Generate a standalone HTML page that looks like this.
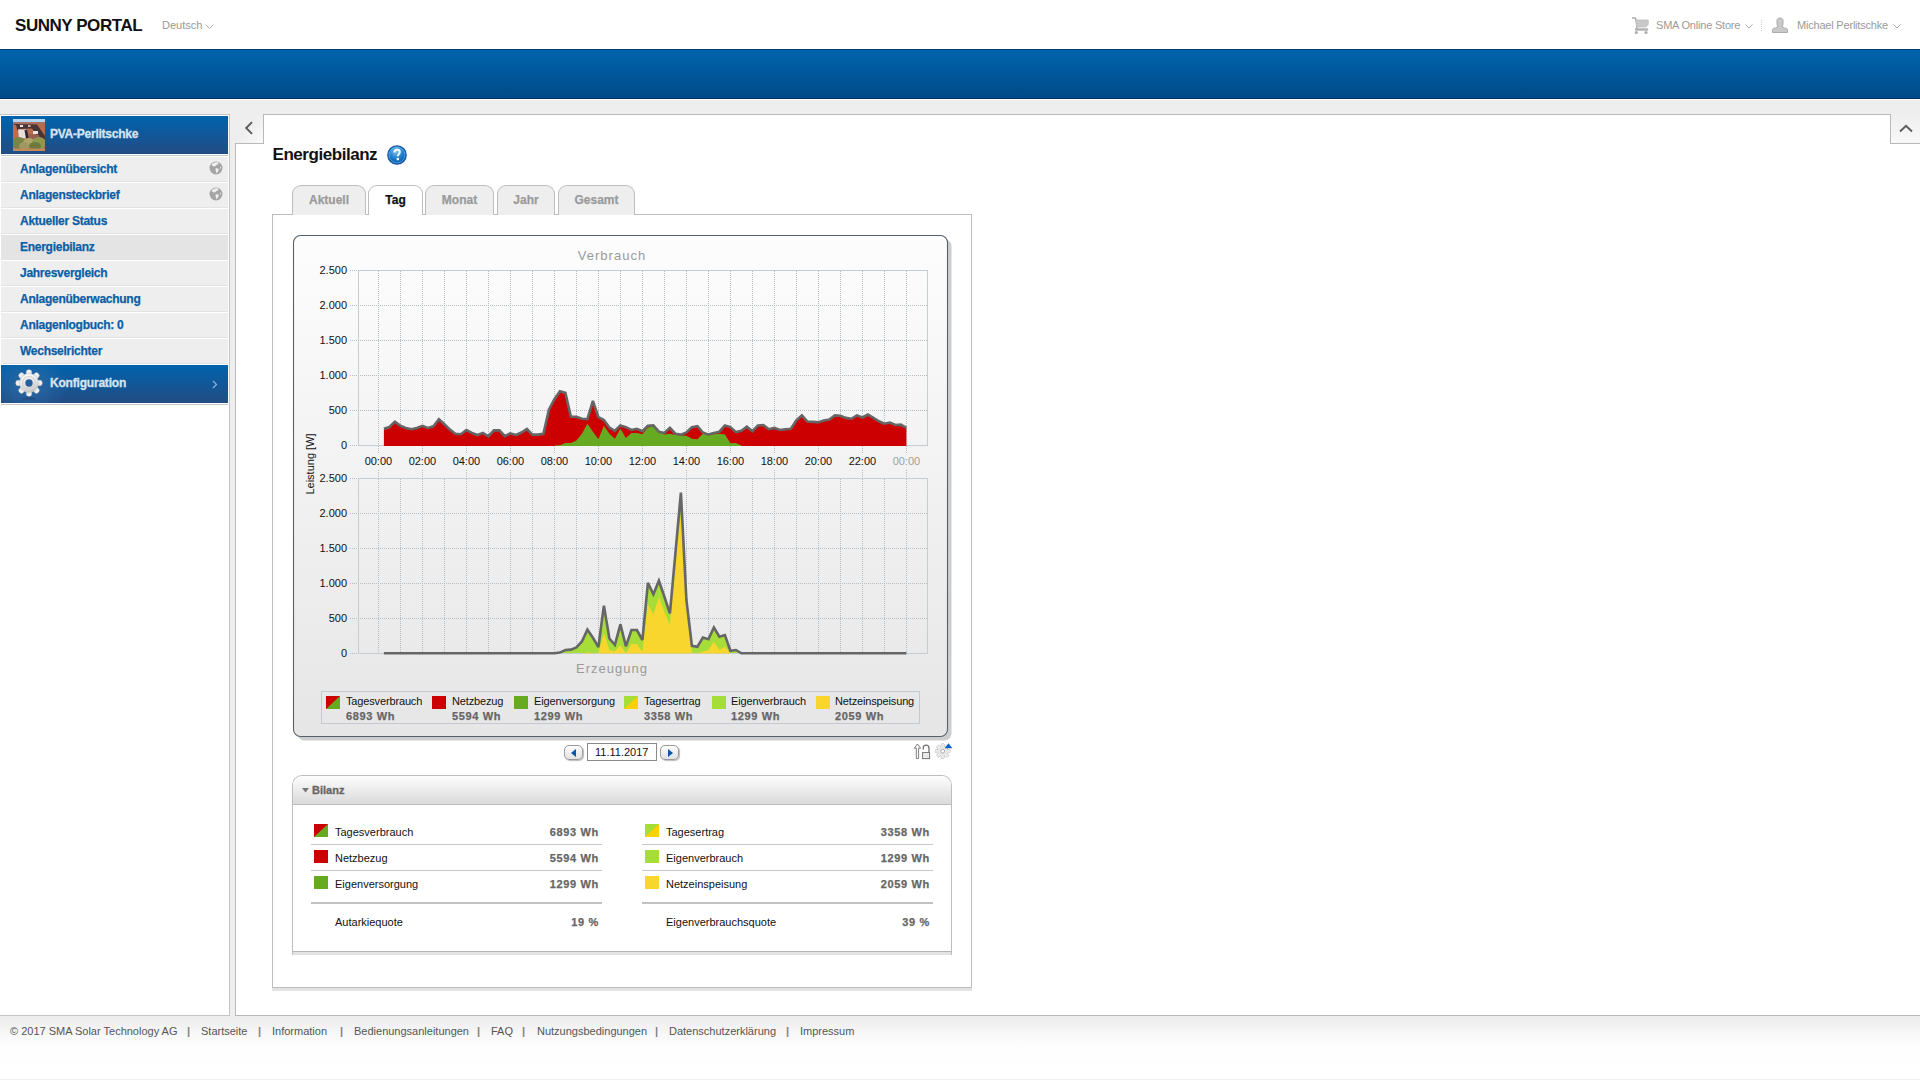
<!DOCTYPE html>
<html><head><meta charset="utf-8"><title>Sunny Portal</title>
<style>
*{box-sizing:border-box}
html,body{margin:0;padding:0}
body{width:1920px;height:1080px;overflow:hidden;position:relative;background:#fff;font-family:"Liberation Sans",sans-serif;}
.a{position:absolute}
.t{position:absolute;white-space:nowrap;line-height:1}
#banner{left:0;top:49px;width:1920px;height:50px;background:linear-gradient(#0064ad,#004a87);border-top:1px solid #003f73;border-bottom:1px solid #003366}
#band{left:0;top:100px;width:1920px;height:916px;background:#eeeeee}
#side{left:0;top:114px;width:230px;height:902px;background:#fff;border-top:1px solid #c4c4c4;border-right:1px solid #c4c4c4;border-bottom:1px solid #c4c4c4}
.shead{position:absolute;left:1px;width:227px;background:linear-gradient(#0063ac,#224c84)}
.mi{position:absolute;left:1px;width:227px;height:26px;background:#eeeeee;border-bottom:1px solid #fff;box-shadow:inset 0 -1px 0 #e2e2e2}
.mi span{position:absolute;left:19px;top:6px;font-size:12px;font-weight:bold;color:#0a5fa6;white-space:nowrap;line-height:1;letter-spacing:-0.27px}
.globe{position:absolute;left:208px;top:4px;width:14px;height:14px}
#content{left:235px;top:143px;width:1685px;height:873px;background:#fff;border-left:1px solid #b9b9b9;border-bottom:1px solid #b9b9b9}
#ctop{left:263px;top:114px;width:1628px;height:30px;background:#fff;border:1px solid #b9b9b9;border-bottom:none}
#ltab{left:236px;top:114px;width:27px;height:29px;background:linear-gradient(135deg,#eeeeee 45%,#fafafa)}
#rtab{left:1891px;top:114px;width:29px;height:29px;background:linear-gradient(#eeeeee,#f8f8f8)}
.hl{position:absolute;height:1px;background:#b9b9b9}
.tab{position:absolute;top:185px;height:30px;border:1px solid #bdbdbd;border-bottom:none;border-radius:9px 9px 0 0;background:#eeeeee;font-size:12px;font-weight:bold;color:#9b9b9b;text-align:center}
.tab span{position:absolute;top:8px;left:0;right:0;line-height:1}
#tpanel{left:272px;top:214px;width:700px;height:774px;border:1px solid #bdbdbd;background:#fff;box-shadow:0 3px 0 #e2e2e2}
#chart{position:absolute;left:0;top:0;pointer-events:none}
.gd{stroke:#b4bcc4;stroke-width:1;stroke-dasharray:1 1;fill:none}
.pb{fill:none;stroke:#c5ccd3;stroke-width:1}
.yl{font-family:"Liberation Sans",sans-serif;font-size:11px;fill:#111;text-anchor:end}
.xl{font-family:"Liberation Sans",sans-serif;font-size:11px;fill:#111;text-anchor:middle}
.xg{fill:#a0a0a0}
.ttl{font-family:"Liberation Sans",sans-serif;font-size:13px;fill:#9a9a9a;text-anchor:middle;letter-spacing:1px}
.yax{font-family:"Liberation Sans",sans-serif;font-size:11px;fill:#111;text-anchor:middle}
.ln{fill:none;stroke:#666;stroke-width:2.6;stroke-linejoin:miter;stroke-miterlimit:3}
.lg{position:absolute;top:696px;width:14px;height:13px}
.lgt{position:absolute;top:696px;font-size:11px;color:#111;white-space:nowrap;line-height:1;letter-spacing:-0.15px}
.lgv{position:absolute;top:711px;font-size:11px;font-weight:bold;color:#666;white-space:nowrap;line-height:1;letter-spacing:0.65px}
.navb{position:absolute;top:745px;width:19px;height:15px;border:1px solid #9a9a9a;border-radius:5px;background:linear-gradient(#fdfdfd,#e2e2e2);box-shadow:1px 1px 1px #bbb}
#bil{left:292px;top:775px;width:660px;height:180px;border:1px solid #bdbdbd;border-bottom:none;border-radius:10px 10px 0 0;background:#fff}
#bilf{left:0;top:175px;width:658px;height:4px;border-top:1px solid #b5b5b5;background:#e2e2e2}
#bilh{left:0;top:0;width:658px;height:29px;border-bottom:1px solid #bdbdbd;border-radius:9px 9px 0 0;background:linear-gradient(#fdfdfd,#dadada)}
.bi{position:absolute;width:14px;height:13px}
.bt{position:absolute;font-size:11px;color:#111;white-space:nowrap;line-height:1}
.bv{position:absolute;font-size:11px;font-weight:bold;color:#666;white-space:nowrap;line-height:1;text-align:right;letter-spacing:0.65px;margin-right:-0.65px}
.bs{position:absolute;height:1px;background:#c9c9c9}
#foot{left:0;top:1016px;width:1920px;height:64px;background:linear-gradient(#ebebeb,#f8f8f8 18px,#fefefe 32px,#fff);border-bottom:1px solid #f0f0f0}
.ft{position:absolute;top:1026px;font-size:11px;color:#555;white-space:nowrap;line-height:1}
.bb{-webkit-text-stroke:0.3px currentColor}
.lgv,.bv,.mi span,.tab span{-webkit-text-stroke:0.25px currentColor}
</style></head>
<body>
<!-- header -->
<div class="t" style="left:15px;top:17px;font-size:17px;font-weight:bold;color:#111;letter-spacing:-0.45px">SUNNY PORTAL</div>
<div class="t" style="left:162px;top:20px;font-size:11px;color:#999">Deutsch</div>
<svg class="a" style="left:205px;top:24px" width="9" height="6"><path d="M0.5,0.5 L4.5,4.5 L8.5,0.5" fill="none" stroke="#aaa" stroke-width="1"/></svg>

<svg class="a" style="left:1632px;top:16.5px" width="17" height="18" viewBox="0 0 17 18"><path d="M0,1 H3.4 L4.2,3.5 L5.2,10.5 L3.8,12" fill="none" stroke="#adadad" stroke-width="1.6" stroke-linejoin="round"/><path d="M3.6,3 H16.2 V7.6 L13.8,9.9 H4.8Z" fill="#c9c9c9" stroke="#bdbdbd" stroke-width="0.8"/><rect x="3" y="11.3" width="13.2" height="2.5" rx="1.1" fill="#b3b3b3"/><circle cx="4.3" cy="15.6" r="1.5" fill="#a9a9a9"/><circle cx="14" cy="15.6" r="1.5" fill="#a9a9a9"/></svg>
<div class="t" style="left:1656px;top:20px;font-size:11px;color:#9a9a9a;letter-spacing:-0.2px">SMA Online Store</div>
<svg class="a" style="left:1745px;top:24px" width="9" height="6"><path d="M0.5,0.5 L4,4 L7.5,0.5" fill="none" stroke="#aaa" stroke-width="1"/></svg>
<div class="a" style="left:1761px;top:20px;width:1px;height:11px;border-left:1px dotted #ccc"></div>
<svg class="a" style="left:1772px;top:17px" width="17" height="17" viewBox="0 0 17 17"><path d="M0.5,15.5 V12.6 C0.5,11.6 2,11.1 3.8,10.9 L5.8,9.6 C5.3,8.6 5,7.6 5,6.2 V3.6 C5,1.9 6,1 8,1 C10,1 11,1.9 11,3.6 V6.2 C11,7.6 10.7,8.6 10.2,9.6 L12.2,10.9 C14,11.1 15.5,11.6 15.5,12.6 V15.5Z" fill="#c9c9c9" stroke="#acacac" stroke-width="1"/></svg>
<div class="t" style="left:1797px;top:20px;font-size:11px;color:#9a9a9a;letter-spacing:-0.2px">Michael Perlitschke</div>
<svg class="a" style="left:1893px;top:24px" width="9" height="6"><path d="M0.5,0.5 L4,4 L7.5,0.5" fill="none" stroke="#aaa" stroke-width="1"/></svg>

<div id="banner" class="a"></div>
<div id="band" class="a"></div>

<!-- sidebar -->
<div id="side" class="a">
  <div class="shead" style="top:1px;height:38px">
    <svg class="a" style="left:12px;top:3px" width="32" height="32" viewBox="0 0 32 32"><defs><filter id="pb" x="0" y="0" width="1" height="1"><feGaussianBlur stdDeviation="0.55" edgeMode="duplicate"/></filter></defs><g filter="url(#pb)"><rect width="32" height="32" fill="#b86a4c"/><rect width="32" height="3.5" fill="#b4d6f2"/><rect y="3" width="32" height="2" fill="#a87060"/><path d="M1,5 L24,5.5 L32,17 L32,21 L27,21 L19,9.5 L6,10 L3,13Z" fill="#4a3434"/><rect x="7" y="6" width="3" height="2" fill="#e8e4e4"/><rect x="15" y="6" width="2.5" height="2" fill="#c8b8b8"/><path d="M5,10.5 L13,10.5 L15,19 L6,20Z" fill="#e6e0dc"/><path d="M11.5,11 L14,11 L16,19 L13,20Z" fill="#2e2830"/><rect x="20" y="12" width="5" height="3" fill="#ece4e2"/><path d="M0,6 L3,6 L5,14 L2,20 L0,20Z" fill="#c46a48"/><path d="M15,15 L26,16 L27,20 L16,20Z" fill="#9a6050"/><ellipse cx="6" cy="24" rx="7" ry="6" fill="#7a8444"/><ellipse cx="16" cy="24" rx="6" ry="5" fill="#b0a468"/><ellipse cx="26" cy="24" rx="7" ry="6" fill="#8c9a50"/><ellipse cx="11" cy="27" rx="5" ry="4" fill="#a09860"/><ellipse cx="22" cy="27" rx="6" ry="4" fill="#6e7a3c"/><rect y="29.5" width="32" height="2.5" fill="#c08a5a"/></g></svg>
    <div class="t bb" style="left:49px;top:12px;font-size:12px;font-weight:bold;color:#d6e4f2;letter-spacing:-0.25px">PVA-Perlitschke</div>
  </div>
  <div class="a" style="left:1px;top:40px;width:227px;height:1px;background:#c8c8c8"></div>
  <div class="mi" style="top:42px"><span>Anlagenübersicht</span><svg class="globe" viewBox="0 0 14 14"><circle cx="7" cy="7" r="6.5" fill="#a4a4a4"/><path d="M2.6,3.8 C3.3,1.9 6,1 8.5,1.3 L9.8,2.4 L8.6,3.5 C7.5,3.4 7,4.6 6.2,5.3 C5,5.8 3.5,5.3 2.6,3.8Z M6.5,7.5 C7.8,7.1 9.3,7.5 9.9,8.5 C9.6,10 8.6,11.4 7.4,12.3 C7,10.9 6.5,9.2 6.5,7.5Z M11,5.6 L11.9,6 L11.8,8 L11,7.3Z" fill="#efefef"/></svg></div>
  <div class="mi" style="top:68px"><span>Anlagensteckbrief</span><svg class="globe" viewBox="0 0 14 14"><circle cx="7" cy="7" r="6.5" fill="#a4a4a4"/><path d="M2.6,3.8 C3.3,1.9 6,1 8.5,1.3 L9.8,2.4 L8.6,3.5 C7.5,3.4 7,4.6 6.2,5.3 C5,5.8 3.5,5.3 2.6,3.8Z M6.5,7.5 C7.8,7.1 9.3,7.5 9.9,8.5 C9.6,10 8.6,11.4 7.4,12.3 C7,10.9 6.5,9.2 6.5,7.5Z M11,5.6 L11.9,6 L11.8,8 L11,7.3Z" fill="#efefef"/></svg></div>
  <div class="mi" style="top:94px"><span>Aktueller Status</span></div>
  <div class="mi" style="top:120px;background:#e4e4e4"><span>Energiebilanz</span></div>
  <div class="mi" style="top:146px"><span>Jahresvergleich</span></div>
  <div class="mi" style="top:172px"><span>Anlagenüberwachung</span></div>
  <div class="mi" style="top:198px"><span>Anlagenlogbuch: 0</span></div>
  <div class="mi" style="top:224px"><span>Wechselrichter</span></div>
  <div class="shead" style="top:250px;height:38px;background:radial-gradient(ellipse 40px 30px at 28px 20px,#2d6aa6,transparent),linear-gradient(#0063ac,#224c84)">
    <svg class="a" style="left:13px;top:4px" width="30" height="32" viewBox="-15 -14 30 32"><defs><linearGradient id="gg" x1="0" y1="0" x2="0.3" y2="1"><stop offset="0" stop-color="#ffffff"/><stop offset="0.6" stop-color="#e6e6e6"/><stop offset="1" stop-color="#c8c8c8"/></linearGradient></defs><ellipse cx="0" cy="15.5" rx="7" ry="1.4" fill="#163a66" opacity="0.35"/><g fill="url(#gg)" stroke="#bdbdbd" stroke-width="0.4"><rect x="-2.7" y="-13.2" width="5.4" height="7" rx="2.2" transform="rotate(0)"/><rect x="-2.7" y="-13.2" width="5.4" height="7" rx="2.2" transform="rotate(45)"/><rect x="-2.7" y="-13.2" width="5.4" height="7" rx="2.2" transform="rotate(90)"/><rect x="-2.7" y="-13.2" width="5.4" height="7" rx="2.2" transform="rotate(135)"/><rect x="-2.7" y="-13.2" width="5.4" height="7" rx="2.2" transform="rotate(180)"/><rect x="-2.7" y="-13.2" width="5.4" height="7" rx="2.2" transform="rotate(225)"/><rect x="-2.7" y="-13.2" width="5.4" height="7" rx="2.2" transform="rotate(270)"/><rect x="-2.7" y="-13.2" width="5.4" height="7" rx="2.2" transform="rotate(315)"/><circle r="9.4"/></g><circle r="6.5" fill="none" stroke="#d2d2d2" stroke-width="1.2"/><circle r="3.7" fill="#235f9c"/></svg>
    <div class="t bb" style="left:49px;top:12px;font-size:12px;font-weight:bold;color:#d6e4f2;letter-spacing:-0.2px">Konfiguration</div>
    <svg class="a" style="left:211px;top:15px" width="6" height="9"><path d="M1,1 L4.5,4.5 L1,8" fill="none" stroke="#8fb3d9" stroke-width="1.2"/></svg>
  </div>
  <div class="a" style="left:1px;top:289px;width:227px;height:1px;background:#c8c8c8"></div>
</div>

<!-- content frame -->
<div id="content" class="a"></div>
<div id="ltab" class="a"></div>
<div id="rtab" class="a"></div>
<div id="ctop" class="a"></div>
<div class="hl" style="left:1891px;top:143px;width:29px"></div>
<div class="hl" style="left:235px;top:143px;width:29px"></div>
<svg class="a" style="left:244px;top:121px" width="10" height="14"><path d="M8,1.2 L2.2,7 L8,12.8" fill="none" stroke="#5a5a5a" stroke-width="1.9"/></svg>
<svg class="a" style="left:1899px;top:124px" width="14" height="9"><path d="M1,7.5 L7,1.8 L13,7.5" fill="none" stroke="#5a5a5a" stroke-width="1.9"/></svg>

<div class="t" style="left:272.5px;top:146px;font-size:17px;font-weight:bold;color:#111;letter-spacing:-0.45px">Energiebilanz</div>
<svg class="a" style="left:386px;top:144px" width="22" height="22" viewBox="0 0 22 22"><defs><radialGradient id="hg" cx="0.45" cy="0.3" r="0.7"><stop offset="0" stop-color="#7cc4f4"/><stop offset="0.6" stop-color="#1a78c8"/><stop offset="1" stop-color="#0a5aaa"/></radialGradient></defs><circle cx="11" cy="11" r="9.2" fill="url(#hg)" stroke="#1656a6" stroke-width="1.3"/><circle cx="11" cy="11" r="7.9" fill="none" stroke="#8fcdf5" stroke-opacity="0.55" stroke-width="0.9"/><path d="M8.4,8.4 C8.4,6.6 9.6,5.7 11.1,5.7 C12.8,5.7 13.8,6.7 13.8,8.1 C13.8,9.9 11.8,10.2 11.8,12.3" fill="none" stroke="#fff" stroke-width="1.9"/><rect x="10.7" y="13.9" width="2.3" height="2.3" fill="#fff"/></svg>

<div id="tpanel" class="a"></div>
<div class="tab" style="left:292px;width:74px"><span>Aktuell</span></div>
<div class="tab" style="left:368px;width:55px;background:#fff;color:#111"><span>Tag</span></div><div class="a" style="left:369px;top:214px;width:53px;height:1px;background:#fff"></div>
<div class="tab" style="left:425px;width:69px"><span>Monat</span></div>
<div class="tab" style="left:497px;width:58px"><span>Jahr</span></div>
<div class="tab" style="left:558px;width:77px"><span>Gesamt</span></div>


<svg id="chart" width="1920" height="1080" viewBox="0 0 1920 1080">
<defs>
<linearGradient id="cbg" x1="0" y1="0" x2="0" y2="1"><stop offset="0" stop-color="#fdfdfd"/><stop offset="1" stop-color="#e6e6e6"/></linearGradient>
</defs>
<rect x="297.5" y="239.5" width="654" height="501" rx="7" fill="#cdcdcd"/>
<rect x="293.5" y="235.5" width="654" height="501" rx="7" fill="url(#cbg)" stroke="#56616b" stroke-width="1.1"/>
<text x="612" y="260" class="ttl">Verbrauch</text>
<line x1="358" y1="270.5" x2="927" y2="270.5" class="gd"/>
<line x1="358" y1="305.5" x2="927" y2="305.5" class="gd"/>
<line x1="358" y1="340.5" x2="927" y2="340.5" class="gd"/>
<line x1="358" y1="375.5" x2="927" y2="375.5" class="gd"/>
<line x1="358" y1="410.5" x2="927" y2="410.5" class="gd"/>
<line x1="378.5" y1="271" x2="378.5" y2="445" class="gd"/>
<line x1="400.5" y1="271" x2="400.5" y2="445" class="gd"/>
<line x1="422.5" y1="271" x2="422.5" y2="445" class="gd"/>
<line x1="444.5" y1="271" x2="444.5" y2="445" class="gd"/>
<line x1="466.5" y1="271" x2="466.5" y2="445" class="gd"/>
<line x1="488.5" y1="271" x2="488.5" y2="445" class="gd"/>
<line x1="510.5" y1="271" x2="510.5" y2="445" class="gd"/>
<line x1="532.5" y1="271" x2="532.5" y2="445" class="gd"/>
<line x1="554.5" y1="271" x2="554.5" y2="445" class="gd"/>
<line x1="576.5" y1="271" x2="576.5" y2="445" class="gd"/>
<line x1="598.5" y1="271" x2="598.5" y2="445" class="gd"/>
<line x1="620.5" y1="271" x2="620.5" y2="445" class="gd"/>
<line x1="642.5" y1="271" x2="642.5" y2="445" class="gd"/>
<line x1="664.5" y1="271" x2="664.5" y2="445" class="gd"/>
<line x1="686.5" y1="271" x2="686.5" y2="445" class="gd"/>
<line x1="708.5" y1="271" x2="708.5" y2="445" class="gd"/>
<line x1="730.5" y1="271" x2="730.5" y2="445" class="gd"/>
<line x1="752.5" y1="271" x2="752.5" y2="445" class="gd"/>
<line x1="774.5" y1="271" x2="774.5" y2="445" class="gd"/>
<line x1="796.5" y1="271" x2="796.5" y2="445" class="gd"/>
<line x1="818.5" y1="271" x2="818.5" y2="445" class="gd"/>
<line x1="840.5" y1="271" x2="840.5" y2="445" class="gd"/>
<line x1="862.5" y1="271" x2="862.5" y2="445" class="gd"/>
<line x1="884.5" y1="271" x2="884.5" y2="445" class="gd"/>
<line x1="906.5" y1="271" x2="906.5" y2="445" class="gd"/>
<line x1="350" y1="270.5" x2="358" y2="270.5" class="gd"/>
<line x1="350" y1="305.5" x2="358" y2="305.5" class="gd"/>
<line x1="350" y1="340.5" x2="358" y2="340.5" class="gd"/>
<line x1="350" y1="375.5" x2="358" y2="375.5" class="gd"/>
<line x1="350" y1="410.5" x2="358" y2="410.5" class="gd"/>
<line x1="350" y1="445.5" x2="358" y2="445.5" class="gd"/>
<rect x="358.5" y="270.5" width="569" height="175" class="pb"/>
<text x="347" y="274.0" class="yl">2.500</text>
<text x="347" y="309.0" class="yl">2.000</text>
<text x="347" y="344.0" class="yl">1.500</text>
<text x="347" y="379.0" class="yl">1.000</text>
<text x="347" y="414.0" class="yl">500</text>
<text x="347" y="449.0" class="yl">0</text>
<text x="378.4" y="465" class="xl">00:00</text>
<text x="422.4" y="465" class="xl">02:00</text>
<text x="466.4" y="465" class="xl">04:00</text>
<text x="510.4" y="465" class="xl">06:00</text>
<text x="554.4" y="465" class="xl">08:00</text>
<text x="598.4" y="465" class="xl">10:00</text>
<text x="642.4" y="465" class="xl">12:00</text>
<text x="686.4" y="465" class="xl">14:00</text>
<text x="730.4" y="465" class="xl">16:00</text>
<text x="774.4" y="465" class="xl">18:00</text>
<text x="818.4" y="465" class="xl">20:00</text>
<text x="862.4" y="465" class="xl">22:00</text>
<text x="906.4" y="465" class="xl xg">00:00</text>
<line x1="378.5" y1="446" x2="378.5" y2="454" class="gd"/>
<line x1="378.5" y1="470" x2="378.5" y2="478" class="gd"/>
<line x1="422.5" y1="446" x2="422.5" y2="454" class="gd"/>
<line x1="422.5" y1="470" x2="422.5" y2="478" class="gd"/>
<line x1="466.5" y1="446" x2="466.5" y2="454" class="gd"/>
<line x1="466.5" y1="470" x2="466.5" y2="478" class="gd"/>
<line x1="510.5" y1="446" x2="510.5" y2="454" class="gd"/>
<line x1="510.5" y1="470" x2="510.5" y2="478" class="gd"/>
<line x1="554.5" y1="446" x2="554.5" y2="454" class="gd"/>
<line x1="554.5" y1="470" x2="554.5" y2="478" class="gd"/>
<line x1="598.5" y1="446" x2="598.5" y2="454" class="gd"/>
<line x1="598.5" y1="470" x2="598.5" y2="478" class="gd"/>
<line x1="642.5" y1="446" x2="642.5" y2="454" class="gd"/>
<line x1="642.5" y1="470" x2="642.5" y2="478" class="gd"/>
<line x1="686.5" y1="446" x2="686.5" y2="454" class="gd"/>
<line x1="686.5" y1="470" x2="686.5" y2="478" class="gd"/>
<line x1="730.5" y1="446" x2="730.5" y2="454" class="gd"/>
<line x1="730.5" y1="470" x2="730.5" y2="478" class="gd"/>
<line x1="774.5" y1="446" x2="774.5" y2="454" class="gd"/>
<line x1="774.5" y1="470" x2="774.5" y2="478" class="gd"/>
<line x1="818.5" y1="446" x2="818.5" y2="454" class="gd"/>
<line x1="818.5" y1="470" x2="818.5" y2="478" class="gd"/>
<line x1="862.5" y1="446" x2="862.5" y2="454" class="gd"/>
<line x1="862.5" y1="470" x2="862.5" y2="478" class="gd"/>
<line x1="906.5" y1="446" x2="906.5" y2="454" class="gd"/>
<line x1="906.5" y1="470" x2="906.5" y2="478" class="gd"/>
<path d="M383.9,446.0 L383.9,428.75 L389.4,427.00 L394.9,421.70 L400.4,425.80 L405.9,427.90 L411.4,429.20 L416.9,427.90 L422.4,425.80 L427.9,427.90 L433.4,426.25 L438.9,419.20 L444.4,424.20 L449.9,429.60 L455.4,433.75 L460.9,434.20 L466.4,430.00 L471.9,432.90 L477.4,435.00 L482.9,432.90 L488.4,436.25 L493.9,430.40 L499.4,430.40 L504.9,436.25 L510.4,433.30 L515.9,435.00 L521.4,432.50 L526.9,429.00 L532.4,434.60 L537.9,434.60 L543.4,433.75 L548.9,409.60 L554.4,399.20 L559.9,391.25 L565.4,392.90 L570.9,416.70 L576.4,416.70 L581.9,418.75 L587.4,419.20 L592.9,400.80 L598.4,417.10 L603.9,420.00 L609.4,427.50 L614.9,430.80 L620.4,425.40 L625.9,427.10 L631.4,430.00 L636.9,428.75 L642.4,431.25 L647.9,425.80 L653.4,425.40 L658.9,431.70 L664.4,432.90 L669.9,427.90 L675.4,433.75 L680.9,434.60 L686.4,432.50 L691.9,427.10 L697.4,426.25 L702.9,432.50 L708.4,434.60 L713.9,432.90 L719.4,431.70 L724.9,425.40 L730.4,427.10 L735.9,432.10 L741.4,430.80 L746.9,426.70 L752.4,431.25 L757.9,425.40 L763.4,425.00 L768.9,429.20 L774.4,427.90 L779.9,430.00 L785.4,429.20 L790.9,428.75 L796.4,420.40 L801.9,415.40 L807.4,421.50 L812.9,421.90 L818.4,422.30 L823.9,420.40 L829.4,419.60 L834.9,415.40 L840.4,415.80 L845.9,417.90 L851.4,418.75 L856.9,415.40 L862.4,417.50 L867.9,414.60 L873.4,417.90 L878.9,421.25 L884.4,423.75 L889.9,422.50 L895.4,425.00 L900.9,424.60 L906.4,427.90 L906.4,446.0 Z" fill="#cc0000"/>
<path d="M554.4,446.0 L554.4,445.50 L559.9,445.20 L565.4,442.90 L570.9,442.90 L576.4,440.40 L581.9,433.75 L587.4,423.75 L592.9,431.70 L598.4,439.20 L603.9,425.80 L609.4,433.75 L614.9,438.75 L620.4,428.75 L625.9,437.90 L631.4,432.90 L636.9,432.90 L642.4,434.20 L647.9,427.50 L653.4,426.70 L658.9,432.10 L664.4,434.60 L669.9,433.75 L675.4,435.00 L680.9,435.40 L686.4,435.80 L691.9,438.75 L697.4,439.20 L702.9,433.75 L708.4,435.00 L713.9,434.20 L719.4,433.75 L724.9,434.60 L730.4,443.30 L735.9,442.90 L741.4,445.50 L741.4,446.0 Z" fill="#66aa22"/>
<path d="M383.9,428.75 L389.4,427.00 L394.9,421.70 L400.4,425.80 L405.9,427.90 L411.4,429.20 L416.9,427.90 L422.4,425.80 L427.9,427.90 L433.4,426.25 L438.9,419.20 L444.4,424.20 L449.9,429.60 L455.4,433.75 L460.9,434.20 L466.4,430.00 L471.9,432.90 L477.4,435.00 L482.9,432.90 L488.4,436.25 L493.9,430.40 L499.4,430.40 L504.9,436.25 L510.4,433.30 L515.9,435.00 L521.4,432.50 L526.9,429.00 L532.4,434.60 L537.9,434.60 L543.4,433.75 L548.9,409.60 L554.4,399.20 L559.9,391.25 L565.4,392.90 L570.9,416.70 L576.4,416.70 L581.9,418.75 L587.4,419.20 L592.9,400.80 L598.4,417.10 L603.9,420.00 L609.4,427.50 L614.9,430.80 L620.4,425.40 L625.9,427.10 L631.4,430.00 L636.9,428.75 L642.4,431.25 L647.9,425.80 L653.4,425.40 L658.9,431.70 L664.4,432.90 L669.9,427.90 L675.4,433.75 L680.9,434.60 L686.4,432.50 L691.9,427.10 L697.4,426.25 L702.9,432.50 L708.4,434.60 L713.9,432.90 L719.4,431.70 L724.9,425.40 L730.4,427.10 L735.9,432.10 L741.4,430.80 L746.9,426.70 L752.4,431.25 L757.9,425.40 L763.4,425.00 L768.9,429.20 L774.4,427.90 L779.9,430.00 L785.4,429.20 L790.9,428.75 L796.4,420.40 L801.9,415.40 L807.4,421.50 L812.9,421.90 L818.4,422.30 L823.9,420.40 L829.4,419.60 L834.9,415.40 L840.4,415.80 L845.9,417.90 L851.4,418.75 L856.9,415.40 L862.4,417.50 L867.9,414.60 L873.4,417.90 L878.9,421.25 L884.4,423.75 L889.9,422.50 L895.4,425.00 L900.9,424.60 L906.4,427.90" class="ln"/>
<line x1="358" y1="478.5" x2="927" y2="478.5" class="gd"/>
<line x1="358" y1="513.5" x2="927" y2="513.5" class="gd"/>
<line x1="358" y1="548.5" x2="927" y2="548.5" class="gd"/>
<line x1="358" y1="583.5" x2="927" y2="583.5" class="gd"/>
<line x1="358" y1="618.5" x2="927" y2="618.5" class="gd"/>
<line x1="378.5" y1="479" x2="378.5" y2="653" class="gd"/>
<line x1="400.5" y1="479" x2="400.5" y2="653" class="gd"/>
<line x1="422.5" y1="479" x2="422.5" y2="653" class="gd"/>
<line x1="444.5" y1="479" x2="444.5" y2="653" class="gd"/>
<line x1="466.5" y1="479" x2="466.5" y2="653" class="gd"/>
<line x1="488.5" y1="479" x2="488.5" y2="653" class="gd"/>
<line x1="510.5" y1="479" x2="510.5" y2="653" class="gd"/>
<line x1="532.5" y1="479" x2="532.5" y2="653" class="gd"/>
<line x1="554.5" y1="479" x2="554.5" y2="653" class="gd"/>
<line x1="576.5" y1="479" x2="576.5" y2="653" class="gd"/>
<line x1="598.5" y1="479" x2="598.5" y2="653" class="gd"/>
<line x1="620.5" y1="479" x2="620.5" y2="653" class="gd"/>
<line x1="642.5" y1="479" x2="642.5" y2="653" class="gd"/>
<line x1="664.5" y1="479" x2="664.5" y2="653" class="gd"/>
<line x1="686.5" y1="479" x2="686.5" y2="653" class="gd"/>
<line x1="708.5" y1="479" x2="708.5" y2="653" class="gd"/>
<line x1="730.5" y1="479" x2="730.5" y2="653" class="gd"/>
<line x1="752.5" y1="479" x2="752.5" y2="653" class="gd"/>
<line x1="774.5" y1="479" x2="774.5" y2="653" class="gd"/>
<line x1="796.5" y1="479" x2="796.5" y2="653" class="gd"/>
<line x1="818.5" y1="479" x2="818.5" y2="653" class="gd"/>
<line x1="840.5" y1="479" x2="840.5" y2="653" class="gd"/>
<line x1="862.5" y1="479" x2="862.5" y2="653" class="gd"/>
<line x1="884.5" y1="479" x2="884.5" y2="653" class="gd"/>
<line x1="906.5" y1="479" x2="906.5" y2="653" class="gd"/>
<line x1="350" y1="478.5" x2="358" y2="478.5" class="gd"/>
<line x1="350" y1="513.5" x2="358" y2="513.5" class="gd"/>
<line x1="350" y1="548.5" x2="358" y2="548.5" class="gd"/>
<line x1="350" y1="583.5" x2="358" y2="583.5" class="gd"/>
<line x1="350" y1="618.5" x2="358" y2="618.5" class="gd"/>
<line x1="350" y1="653.5" x2="358" y2="653.5" class="gd"/>
<rect x="358.5" y="478.5" width="569" height="175" class="pb"/>
<text x="347" y="482.0" class="yl">2.500</text>
<text x="347" y="517.0" class="yl">2.000</text>
<text x="347" y="552.0" class="yl">1.500</text>
<text x="347" y="587.0" class="yl">1.000</text>
<text x="347" y="622.0" class="yl">500</text>
<text x="347" y="657.0" class="yl">0</text>
<path d="M383.9,653.0 L383.9,653.30 L389.4,653.30 L394.9,653.30 L400.4,653.30 L405.9,653.30 L411.4,653.30 L416.9,653.30 L422.4,653.30 L427.9,653.30 L433.4,653.30 L438.9,653.30 L444.4,653.30 L449.9,653.30 L455.4,653.30 L460.9,653.30 L466.4,653.30 L471.9,653.30 L477.4,653.30 L482.9,653.30 L488.4,653.30 L493.9,653.30 L499.4,653.30 L504.9,653.30 L510.4,653.30 L515.9,653.30 L521.4,653.30 L526.9,653.30 L532.4,653.30 L537.9,653.30 L543.4,653.30 L548.9,653.30 L554.4,653.30 L559.9,652.60 L565.4,650.00 L570.9,649.60 L576.4,647.40 L581.9,641.50 L587.4,629.60 L592.9,637.80 L598.4,647.00 L603.9,605.60 L609.4,638.50 L614.9,644.80 L620.4,624.40 L625.9,646.30 L631.4,630.00 L636.9,630.00 L642.4,640.00 L647.9,582.80 L653.4,594.30 L658.9,580.80 L664.4,596.70 L669.9,613.30 L675.4,553.30 L680.9,492.50 L686.4,600.00 L691.9,645.80 L697.4,646.70 L702.9,637.50 L708.4,639.20 L713.9,627.50 L719.4,636.70 L724.9,635.00 L730.4,650.80 L735.9,650.00 L741.4,653.30 L746.9,653.30 L752.4,653.30 L757.9,653.30 L763.4,653.30 L768.9,653.30 L774.4,653.30 L779.9,653.30 L785.4,653.30 L790.9,653.30 L796.4,653.30 L801.9,653.30 L807.4,653.30 L812.9,653.30 L818.4,653.30 L823.9,653.30 L829.4,653.30 L834.9,653.30 L840.4,653.30 L845.9,653.30 L851.4,653.30 L856.9,653.30 L862.4,653.30 L867.9,653.30 L873.4,653.30 L878.9,653.30 L884.4,653.30 L889.9,653.30 L895.4,653.30 L900.9,653.30 L906.4,653.30 L906.4,653.0 Z" fill="#a6dd38"/>
<path d="M581.9,653.5 L581.9,653.30 L587.4,652.50 L592.9,653.30 L598.4,653.30 L603.9,633.30 L609.4,650.00 L614.9,651.50 L620.4,645.20 L625.9,653.30 L631.4,644.00 L636.9,644.00 L642.4,651.50 L647.9,604.30 L653.4,614.30 L658.9,597.00 L664.4,611.70 L669.9,625.00 L675.4,557.00 L680.9,514.20 L686.4,601.70 L691.9,653.30 L697.4,653.30 L702.9,651.70 L708.4,650.00 L713.9,641.70 L719.4,650.00 L724.9,646.70 L730.4,653.30 L730.4,653.5 Z" fill="#f9d62e"/>
<path d="M383.9,653.30 L389.4,653.30 L394.9,653.30 L400.4,653.30 L405.9,653.30 L411.4,653.30 L416.9,653.30 L422.4,653.30 L427.9,653.30 L433.4,653.30 L438.9,653.30 L444.4,653.30 L449.9,653.30 L455.4,653.30 L460.9,653.30 L466.4,653.30 L471.9,653.30 L477.4,653.30 L482.9,653.30 L488.4,653.30 L493.9,653.30 L499.4,653.30 L504.9,653.30 L510.4,653.30 L515.9,653.30 L521.4,653.30 L526.9,653.30 L532.4,653.30 L537.9,653.30 L543.4,653.30 L548.9,653.30 L554.4,653.30 L559.9,652.60 L565.4,650.00 L570.9,649.60 L576.4,647.40 L581.9,641.50 L587.4,629.60 L592.9,637.80 L598.4,647.00 L603.9,605.60 L609.4,638.50 L614.9,644.80 L620.4,624.40 L625.9,646.30 L631.4,630.00 L636.9,630.00 L642.4,640.00 L647.9,582.80 L653.4,594.30 L658.9,580.80 L664.4,596.70 L669.9,613.30 L675.4,553.30 L680.9,492.50 L686.4,600.00 L691.9,645.80 L697.4,646.70 L702.9,637.50 L708.4,639.20 L713.9,627.50 L719.4,636.70 L724.9,635.00 L730.4,650.80 L735.9,650.00 L741.4,653.30 L746.9,653.30 L752.4,653.30 L757.9,653.30 L763.4,653.30 L768.9,653.30 L774.4,653.30 L779.9,653.30 L785.4,653.30 L790.9,653.30 L796.4,653.30 L801.9,653.30 L807.4,653.30 L812.9,653.30 L818.4,653.30 L823.9,653.30 L829.4,653.30 L834.9,653.30 L840.4,653.30 L845.9,653.30 L851.4,653.30 L856.9,653.30 L862.4,653.30 L867.9,653.30 L873.4,653.30 L878.9,653.30 L884.4,653.30 L889.9,653.30 L895.4,653.30 L900.9,653.30 L906.4,653.30" class="ln"/>
<text x="612" y="673" class="ttl">Erzeugung</text>
<text transform="translate(314,464) rotate(-90)" class="yax">Leistung [W]</text>
<rect x="321.5" y="691.5" width="598" height="32" fill="none" stroke="#c3c9cf"/>
</svg>


<!-- legend -->
<svg class="lg" style="left:326px"><path d="M0,0H14V13H0Z" fill="#66aa22"/><path d="M0,0H14L0,13Z" fill="#cc0000"/></svg>
<div class="lgt" style="left:346px">Tagesverbrauch</div><div class="lgv" style="left:346px">6893 Wh</div>
<svg class="lg" style="left:432px"><rect width="14" height="13" fill="#cc0000"/></svg>
<div class="lgt" style="left:452px">Netzbezug</div><div class="lgv" style="left:452px">5594 Wh</div>
<svg class="lg" style="left:514px"><rect width="14" height="13" fill="#66aa22"/></svg>
<div class="lgt" style="left:534px">Eigenversorgung</div><div class="lgv" style="left:534px">1299 Wh</div>
<svg class="lg" style="left:624px"><path d="M0,0H14V13H0Z" fill="#fdd000"/><path d="M0,0H14L0,13Z" fill="#a6dd38"/></svg>
<div class="lgt" style="left:644px">Tagesertrag</div><div class="lgv" style="left:644px">3358 Wh</div>
<svg class="lg" style="left:712px"><rect width="14" height="13" fill="#a6dd38"/></svg>
<div class="lgt" style="left:731px">Eigenverbrauch</div><div class="lgv" style="left:731px">1299 Wh</div>
<svg class="lg" style="left:816px"><rect width="14" height="13" fill="#f9d62e"/></svg>
<div class="lgt" style="left:835px">Netzeinspeisung</div><div class="lgv" style="left:835px">2059 Wh</div>

<!-- date nav -->
<div class="navb" style="left:564px"><svg class="a" style="left:6px;top:3px" width="6" height="8"><path d="M5,0 V8 L0,4Z" fill="#0a56a8"/></svg></div>
<div class="a" style="left:587px;top:743px;width:70px;height:18px;border:1px solid #8a8a8a;background:#fff"></div>
<div class="t" style="left:595px;top:747px;font-size:11px;color:#111">11.11.2017</div>
<div class="navb" style="left:660px"><svg class="a" style="left:7px;top:3px" width="6" height="8"><path d="M0,0 V8 L5,4Z" fill="#0a56a8"/></svg></div>
<svg class="a" style="left:913px;top:743px" width="40" height="17" viewBox="0 0 40 17"><path d="M4.4,1 L1.3,5.2 H3.3 V15.5 H5.6 V5.2 H7.6Z" fill="#fbfbfb" stroke="#707070" stroke-width="0.9" stroke-linejoin="round"/><path d="M10.2,6.6 V5.2 C10.2,2.9 11.4,2.2 13,2.2 C14.8,2.2 16,2.9 16,5.2 V9.5" fill="none" stroke="#707070" stroke-width="1.3"/><rect x="9.6" y="9.6" width="7" height="6" fill="#fbfbfb" stroke="#707070" stroke-width="1"/><path d="M10.5,12 H15.8 M10.5,13.8 H15.8" stroke="#d0d0d0" stroke-width="0.8"/><g transform="translate(29.7,8.2)"><g fill="#e8e8e8" stroke="#a8a8a8" stroke-width="0.7"><rect x="-1.5" y="-7.4" width="3" height="4" rx="0.8" transform="rotate(0)"/><rect x="-1.5" y="-7.4" width="3" height="4" rx="0.8" transform="rotate(45)"/><rect x="-1.5" y="-7.4" width="3" height="4" rx="0.8" transform="rotate(90)"/><rect x="-1.5" y="-7.4" width="3" height="4" rx="0.8" transform="rotate(135)"/><rect x="-1.5" y="-7.4" width="3" height="4" rx="0.8" transform="rotate(180)"/><rect x="-1.5" y="-7.4" width="3" height="4" rx="0.8" transform="rotate(225)"/><rect x="-1.5" y="-7.4" width="3" height="4" rx="0.8" transform="rotate(270)"/><rect x="-1.5" y="-7.4" width="3" height="4" rx="0.8" transform="rotate(315)"/><circle r="5"/></g><g fill="#e8e8e8"><rect x="-1.5" y="-7.4" width="3" height="4" rx="0.8" stroke="none" transform="rotate(0)"/><rect x="-1.5" y="-7.4" width="3" height="4" rx="0.8" stroke="none" transform="rotate(45)"/><rect x="-1.5" y="-7.4" width="3" height="4" rx="0.8" stroke="none" transform="rotate(90)"/><rect x="-1.5" y="-7.4" width="3" height="4" rx="0.8" stroke="none" transform="rotate(135)"/><rect x="-1.5" y="-7.4" width="3" height="4" rx="0.8" stroke="none" transform="rotate(180)"/><rect x="-1.5" y="-7.4" width="3" height="4" rx="0.8" stroke="none" transform="rotate(225)"/><rect x="-1.5" y="-7.4" width="3" height="4" rx="0.8" stroke="none" transform="rotate(270)"/><rect x="-1.5" y="-7.4" width="3" height="4" rx="0.8" stroke="none" transform="rotate(315)"/></g><circle r="4.6" fill="#e8e8e8"/><circle r="1.9" fill="#fff" stroke="#9a9a9a" stroke-width="0.8"/></g><path d="M31.6,5.3 L35.5,0.2 L39.4,5.3Z" fill="#0a62c4"/></svg>

<!-- bilanz -->
<div id="bil" class="a">
  <div id="bilh" class="a"></div><div id="bilf" class="a"></div>
  <svg class="a" style="left:9px;top:12px" width="8" height="5"><path d="M0,0H7L3.5,4.5Z" fill="#777"/></svg>
  <div class="t bb" style="left:19px;top:9px;font-size:11px;font-weight:bold;color:#666">Bilanz</div>
</div>
<svg class="bi" style="left:314px;top:824px"><path d="M0,0H14V13H0Z" fill="#66aa22"/><path d="M0,0H14L0,13Z" fill="#cc0000"/></svg>
<div class="bt" style="left:335px;top:827px">Tagesverbrauch</div><div class="bv" style="left:499px;width:100px;top:827px">6893 Wh</div>
<div class="bs" style="left:311px;top:844px;width:291px"></div>
<svg class="bi" style="left:314px;top:850px"><rect width="14" height="13" fill="#cc0000"/></svg>
<div class="bt" style="left:335px;top:853px">Netzbezug</div><div class="bv" style="left:499px;width:100px;top:853px">5594 Wh</div>
<div class="bs" style="left:311px;top:870px;width:291px"></div>
<svg class="bi" style="left:314px;top:876px"><rect width="14" height="13" fill="#66aa22"/></svg>
<div class="bt" style="left:335px;top:879px">Eigenversorgung</div><div class="bv" style="left:499px;width:100px;top:879px">1299 Wh</div>
<div class="bs" style="left:311px;top:902px;width:291px;height:2px;background:#c2c2c2"></div>
<div class="bt" style="left:335px;top:917px">Autarkiequote</div><div class="bv" style="left:499px;width:100px;top:917px">19 %</div>

<svg class="bi" style="left:645px;top:824px"><path d="M0,0H14V13H0Z" fill="#fdd000"/><path d="M0,0H14L0,13Z" fill="#a6dd38"/></svg>
<div class="bt" style="left:666px;top:827px">Tagesertrag</div><div class="bv" style="left:830px;width:100px;top:827px">3358 Wh</div>
<div class="bs" style="left:642px;top:844px;width:291px"></div>
<svg class="bi" style="left:645px;top:850px"><rect width="14" height="13" fill="#a6dd38"/></svg>
<div class="bt" style="left:666px;top:853px">Eigenverbrauch</div><div class="bv" style="left:830px;width:100px;top:853px">1299 Wh</div>
<div class="bs" style="left:642px;top:870px;width:291px"></div>
<svg class="bi" style="left:645px;top:876px"><rect width="14" height="13" fill="#f9d62e"/></svg>
<div class="bt" style="left:666px;top:879px">Netzeinspeisung</div><div class="bv" style="left:830px;width:100px;top:879px">2059 Wh</div>
<div class="bs" style="left:642px;top:902px;width:291px;height:2px;background:#c2c2c2"></div>
<div class="bt" style="left:666px;top:917px">Eigenverbrauchsquote</div><div class="bv" style="left:830px;width:100px;top:917px">39 %</div>

<!-- footer -->
<div id="foot" class="a"></div>
<div class="ft" style="left:10px">© 2017 SMA Solar Technology AG</div>
<div class="ft" style="left:187px;font-weight:bold;color:#808080">|</div>
<div class="ft" style="left:201px">Startseite</div>
<div class="ft" style="left:258px;font-weight:bold;color:#808080">|</div>
<div class="ft" style="left:272px">Information</div>
<div class="ft" style="left:340px;font-weight:bold;color:#808080">|</div>
<div class="ft" style="left:354px">Bedienungsanleitungen</div>
<div class="ft" style="left:477px;font-weight:bold;color:#808080">|</div>
<div class="ft" style="left:491px">FAQ</div>
<div class="ft" style="left:522px;font-weight:bold;color:#808080">|</div>
<div class="ft" style="left:537px">Nutzungsbedingungen</div>
<div class="ft" style="left:655px;font-weight:bold;color:#808080">|</div>
<div class="ft" style="left:669px">Datenschutzerklärung</div>
<div class="ft" style="left:786px;font-weight:bold;color:#808080">|</div>
<div class="ft" style="left:800px">Impressum</div>
</body></html>
